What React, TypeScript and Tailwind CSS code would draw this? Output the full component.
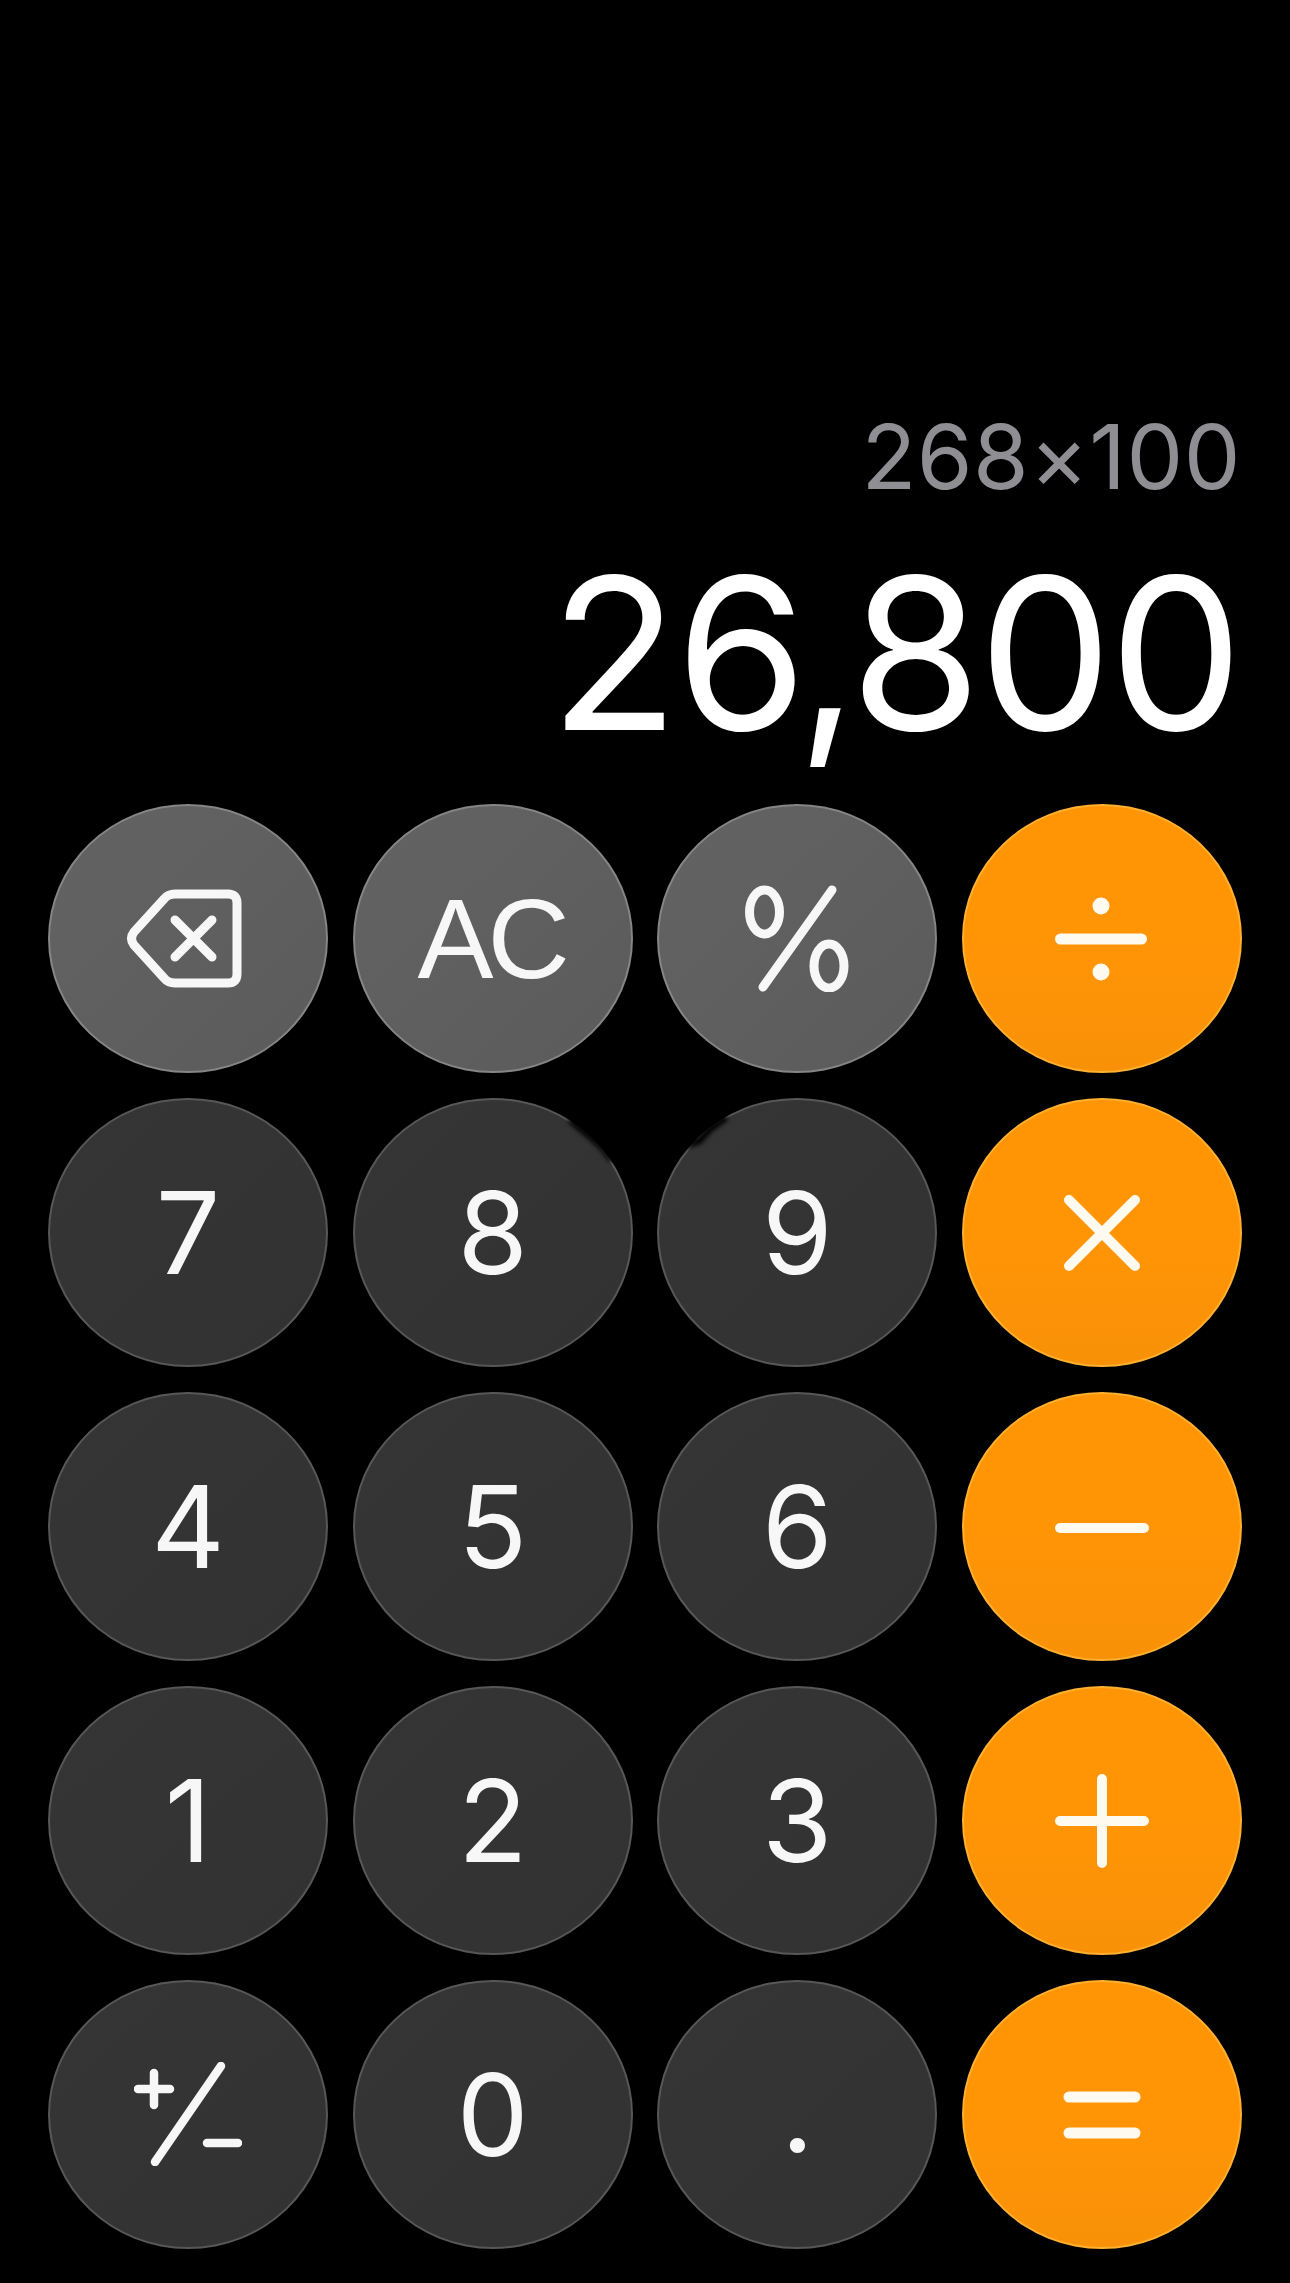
import type { ReactNode } from "react";

type Kind = "top" | "num" | "op";

const kinds: Record<Kind, string> = {
  top: "bg-linear-to-br from-[#636363] to-[#5b5b5b] border-[#858585]",
  num: "bg-linear-to-br from-[#353535] to-[#323232] border-[#575757]",
  op: "bg-linear-to-b from-[#ff9505] via-[#ff9505] to-[#f99108] border-[#ffb030]",
};

function Key({ kind = "num", children }: { kind?: Kind; children: ReactNode }) {
  return (
    <button
      className={`h-[269px] rounded-[50%] border-2 flex items-center justify-center text-[#f7f7f7] text-[114px] leading-none font-['Inter',sans-serif] font-normal ${kinds[kind]}`}
    >
      {children}
    </button>
  );
}

const stroke = {
  fill: "none",
  stroke: "#fffaf0",
  strokeLinecap: "round" as const,
  strokeLinejoin: "round" as const,
};

function Backspace() {
  return (
    <svg width="116" height="99" viewBox="0 0 116 99" className="-ml-[8px]" {...stroke} strokeWidth="9" style={{ stroke: "#f7f7f7" }}>
      <path d="M49 5H102Q111 5 111 14V85Q111 94 102 94H49Q42 94 38 89L8 56Q3 49.5 8 43L38 10Q42 5 49 5Z" />
      <path d="M49 31 86 68M86 31 49 68" />
    </svg>
  );
}

function Percent() {
  return (
    <svg width="104" height="107" viewBox="0 0 104 107" {...stroke} strokeWidth="9" style={{ stroke: "#f7f7f7" }}>
      <ellipse cx="19.5" cy="27" rx="15" ry="22" />
      <ellipse cx="84" cy="81" rx="15" ry="22" />
      <path d="M87 5 18 102" />
    </svg>
  );
}

function PlusMinus() {
  return (
    <svg width="108" height="104" viewBox="0 0 108 104" className="-mt-[1px]" {...stroke} strokeWidth="8.5" style={{ stroke: "#f7f7f7" }}>
      <path d="M4 27H36M20 11V43M87 4 21 100M73 81H104" />
    </svg>
  );
}

function Divide() {
  return (
    <svg width="94" height="84" viewBox="0 0 94 84" className="mt-[1px] -ml-[2px]">
      <rect x="1" y="36.5" width="92" height="11" rx="5.5" fill="#fffaf0" />
      <ellipse cx="47" cy="9" rx="8.5" ry="8.5" fill="#fffaf0" />
      <ellipse cx="47" cy="75" rx="8.5" ry="8.5" fill="#fffaf0" />
    </svg>
  );
}

function Times() {
  return (
    <svg width="78" height="78" viewBox="0 0 78 78" {...stroke} strokeWidth="10">
      <path d="M6 6 72 72M72 6 6 72" />
    </svg>
  );
}

function Minus() {
  return (
    <svg width="94" height="10" viewBox="0 0 94 10" className="mt-[3px]" {...stroke} strokeWidth="10">
      <path d="M5 5H89" />
    </svg>
  );
}

function Plus() {
  return (
    <svg width="94" height="94" viewBox="0 0 94 94" className="mt-[1px]" {...stroke} strokeWidth="10">
      <path d="M5 47H89M47 5V89" />
    </svg>
  );
}

function Equals() {
  return (
    <svg width="78" height="48" viewBox="0 0 78 48" {...stroke} strokeWidth="11">
      <path d="M6 6H72M6 42H72" />
    </svg>
  );
}

export default function App() {
  return (
    <div className="w-[1290px] h-[2283px] bg-black flex flex-col justify-end px-[48px] pb-[34px] overflow-hidden">
      {/* Display */}
      <div className="text-right font-['Inter',sans-serif] font-normal">
        <div className="text-[90px] leading-[90px] text-[#8e8e93] pr-[1px] tracking-[0.5px] mb-[45px]">268×100</div>
        <div className="text-[212px] leading-[212px] text-white pr-[2px] tracking-[-3px] mb-[45px]">26,800</div>
      </div>

      {/* Keypad */}
      <div className="relative grid grid-cols-4 gap-x-[24.67px] gap-y-[25px]">
        <Key kind="top"><Backspace /></Key>
        <Key kind="top"><span className="-ml-[4px] font-['Liberation_Sans',sans-serif] text-[114px] tracking-[-6px]">AC</span></Key>
        <Key kind="top"><Percent /></Key>
        <Key kind="op"><Divide /></Key>

        <Key>7</Key>
        <Key>8</Key>
        <Key>9</Key>
        <Key kind="op"><Times /></Key>

        <Key>4</Key>
        <Key>5</Key>
        <Key>6</Key>
        <Key kind="op"><Minus /></Key>

        <Key>1</Key>
        <Key>2</Key>
        <Key>3</Key>
        <Key kind="op"><Plus /></Key>

        <Key><PlusMinus /></Key>
        <Key>0</Key>
        <Key><span className="-mt-[8px]">.</span></Key>
        <Key kind="op"><Equals /></Key>

        {/* scuff on the rims of 8 and 9 */}
        <svg width="160" height="50" viewBox="0 0 160 50" className="absolute left-[520px] top-[310px] blur-[2px]" fill="none" stroke="#000" strokeWidth="7" strokeLinecap="round">
          <path d="M4 7 22 22 34 33 43 44" />
          <path d="M156 5 142 15 131 27 118 31" />
        </svg>
      </div>
    </div>
  );
}
